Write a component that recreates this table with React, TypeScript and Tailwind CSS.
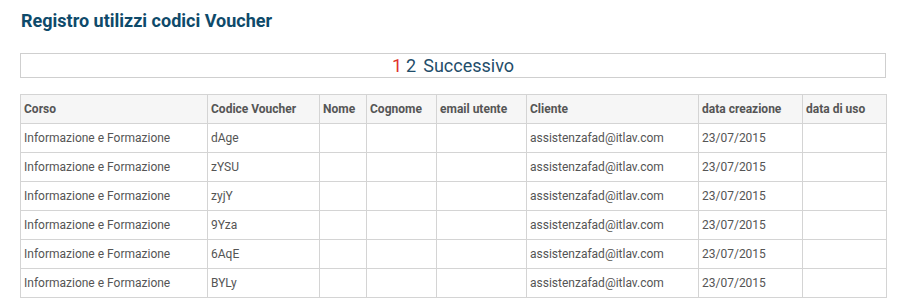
const columns = [
  { label: "Corso", w: "w-[187px]" },
  { label: "Codice Voucher", w: "w-[112px]" },
  { label: "Nome", w: "w-[47px]" },
  { label: "Cognome", w: "w-[70px]" },
  { label: "email utente", w: "w-[90px]" },
  { label: "Cliente", w: "w-[172px]" },
  { label: "data creazione", w: "w-[104px]" },
  { label: "data di uso", w: "w-[84px]" },
];

const codes = ["dAge", "zYSU", "zyjY", "9Yza", "6AqE", "BYLy"];

export default function App() {
  return (
    <div className="w-[902px] h-[298px] bg-white px-5 pt-[9px] font-['Roboto',sans-serif] overflow-hidden">
      <h1 className="text-[18px] font-bold leading-[24px] text-[#0e4a6a] pl-px">
        Registro utilizzi codici Voucher
      </h1>

      {/* paginazione */}
      <div className="mt-[20px] w-[866px] h-[25px] border border-[#cfcfcf] flex items-center justify-center text-[18px] leading-none text-[#1f4d6a]">
        <span className="text-[#e0322c]">1</span>
        <span className="ml-[4px]">2</span>
        <span className="ml-[7px]">Successivo</span>
      </div>

      <table className="mt-[16px] w-[866px] table-fixed border-collapse text-[12px] text-[#555]">
        <thead>
          <tr className="bg-[#f6f6f6] h-[29px]">
            {columns.map((c) => (
              <th key={c.label} className={`${c.w} border border-[#d4d4d4] px-[3px] text-left font-bold`}>
                {c.label}
              </th>
            ))}
          </tr>
        </thead>
        <tbody>
          {codes.map((code) => (
            <tr key={code} className="h-[29px]">
              <td className="border border-[#d4d4d4] px-[3px]">Informazione e Formazione</td>
              <td className="border border-[#d4d4d4] px-[3px]">{code}</td>
              <td className="border border-[#d4d4d4] px-[3px]"></td>
              <td className="border border-[#d4d4d4] px-[3px]"></td>
              <td className="border border-[#d4d4d4] px-[3px]"></td>
              <td className="border border-[#d4d4d4] px-[3px]">assistenzafad@itlav.com</td>
              <td className="border border-[#d4d4d4] px-[3px]">23/07/2015</td>
              <td className="border border-[#d4d4d4] px-[3px]"></td>
            </tr>
          ))}
        </tbody>
      </table>
    </div>
  );
}
